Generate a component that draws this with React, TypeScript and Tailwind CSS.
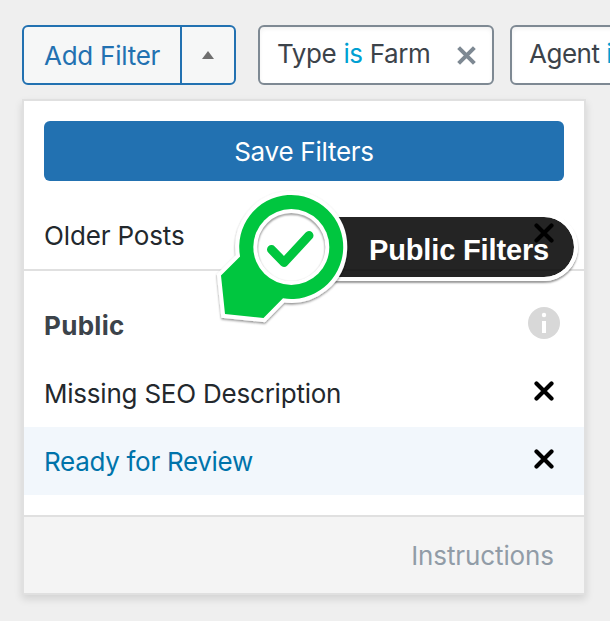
import React from 'react';

function Cross({ className = '', size = 20, width = 4.2, round = true }: { className?: string; size?: number; width?: number; round?: boolean }) {
  return (
    <svg className={className} width={size} height={size} viewBox="0 0 20 20" fill="none" stroke="currentColor" strokeWidth={width} strokeLinecap={round ? 'round' : 'butt'}>
      <path d="M2.5 2.5 17.5 17.5M17.5 2.5 2.5 17.5" />
    </svg>
  );
}

function FilterRow({ label, active = false, spacing }: { label: string; active?: boolean; spacing: string }) {
  return (
    <div className={`flex h-[68px] shrink-0 items-center justify-between pr-[30px] pl-5 ${active ? 'bg-[#f2f7fc] text-[#0073aa]' : 'text-[#23282d]'}`}>
      <span className={`pt-0.5 ${spacing}`}>{label}</span>
      <Cross className="mb-1 text-black" />
    </div>
  );
}

function Callout() {
  return (
    <>
      <div className="absolute top-[213px] left-[291px] flex h-[68px] w-[287px] items-center rounded-r-full border-4 border-l-0 border-white bg-[#000000db] bg-clip-padding pl-[78px] font-['Liberation_Sans',Arial,sans-serif] text-[29px] font-bold text-white shadow-[0_2px_2px_rgba(0,0,0,0.4)]">
        <span className="pt-[5px] tracking-[-0.15px] whitespace-nowrap">Public Filters</span>
      </div>
      <svg className="absolute top-[180px] left-[205px]" width="160" height="160" viewBox="205 180 160 160" fill="none">
        <defs>
          <filter id="calloutShadow" x="-20%" y="-20%" width="140%" height="140%">
            <feDropShadow dx="0" dy="1.5" stdDeviation="1" floodColor="#000" floodOpacity="0.45" />
          </filter>
          <filter id="ringShade" x="-20%" y="-20%" width="140%" height="140%">
            <feGaussianBlur stdDeviation="1" />
          </filter>
          <clipPath id="hole">
            <circle cx="291.3" cy="247" r="34" />
          </clipPath>
        </defs>
        <g filter="url(#calloutShadow)">
          <path d="M240.1 256.5 221 275.5 225 314 263.5 318 283 298.3A52 52 0 1 0 240.1 256.5Z" fill="#00c63f" stroke="#fff" strokeWidth="8" />
        </g>
        <path d="M240.1 256.5 221 275.5 225 314 263.5 318 283 298.3A52 52 0 1 0 240.1 256.5Z" fill="#00c63f" />
        <circle cx="291.3" cy="247" r="38" fill="#fff" />
        <g clipPath="url(#hole)">
          <circle cx="291.3" cy="248.5" r="35" stroke="#000" strokeOpacity="0.55" strokeWidth="2" filter="url(#ringShade)" />
        </g>
        <path d="m271.5 249.5 12.5 13 25-27" stroke="#00c63f" strokeWidth="9" strokeLinecap="round" strokeLinejoin="round" />
      </svg>
    </>
  );
}

export default function App() {
  return (
    <main className="relative h-[621px] w-[610px] overflow-hidden bg-[#efefef] pt-[25px] pl-[22px] font-[Inter,sans-serif] text-[26px] leading-8">
      <div className="flex h-[60px] w-[800px]">
        <div className="flex w-[214px] rounded-md border-2 border-[#2271b1] bg-[#f6f7f7] text-[#2271b1]">
          <div className="flex w-[158px] items-center border-r-2 border-[#2271b1] pl-5">
            <span className="pt-0.5 tracking-[-0.25px] whitespace-nowrap">Add Filter</span>
          </div>
          <div className="flex flex-1 items-center justify-center">
            <svg width="12" height="8" viewBox="0 0 12 8" fill="#6f6f6f"><path d="M6 0 12 8H0Z" /></svg>
          </div>
        </div>
        <div className="ml-[22px] flex w-[236px] items-center justify-between rounded-md border-2 border-[#7e8993] bg-white pr-[15px] pl-[17px] text-[#3c434a] shadow-[inset_0_2px_4px_rgba(0,0,0,0.06)]">
          <span className="pb-0.5 tracking-[-0.36px] whitespace-nowrap">Type <span className="text-[#00a0d2]">is</span> Farm</span>
          <Cross className="text-[#7e8993]" size={21} width={3.8} round={false} />
        </div>
        <div className="ml-4 flex w-[236px] items-center rounded-md border-2 border-[#7e8993] bg-white pl-[17px] text-[#3c434a] shadow-[inset_0_2px_4px_rgba(0,0,0,0.06)]">
          <span className="pb-0.5 tracking-[-0.5px] whitespace-nowrap">Agent <span className="text-[#00a0d2]">is</span></span>
        </div>
      </div>

      <section className="mt-3.5 flex h-[496px] w-[564px] flex-col border-2 border-[#e0e0e0] bg-white shadow-[0_4px_8px_rgba(0,0,0,0.12)]">
        <button className="mx-5 mt-5 flex h-[60px] shrink-0 items-center justify-center rounded-md bg-[#2271b1] pt-0.5 tracking-[-0.25px] text-white">Save Filters</button>
        <div className="mt-5 border-b-2 border-[#e0e0e0]">
          <FilterRow label="Older Posts" spacing="tracking-[-0.15px]" />
        </div>
        <div className="flex h-[88px] shrink-0 items-center justify-between pr-6 pl-5 text-[#3c434a]">
          <span className="pt-[22px] font-bold tracking-[0.3px]">Public</span>
          <svg className="mt-4" width="32" height="32" viewBox="0 0 32 32">
            <circle cx="16" cy="16" r="16" fill="#d8d8d8" />
            <circle cx="16" cy="8" r="2.2" fill="#fff" />
            <path d="M14 14h4v12h-4z" fill="#fff" />
          </svg>
        </div>
        <FilterRow label="Missing SEO Description" spacing="tracking-[-0.22px]" />
        <FilterRow label="Ready for Review" active spacing="tracking-[-0.3px]" />
        <footer className="mt-5 flex flex-1 items-center justify-end border-t-2 border-[#e0e0e0] bg-[#f4f4f4] pr-[30px] text-[#919ca7]">
          <span className="pt-0.5 tracking-[-0.1px]">Instructions</span>
        </footer>
      </section>
      <Callout />
    </main>
  );
}
